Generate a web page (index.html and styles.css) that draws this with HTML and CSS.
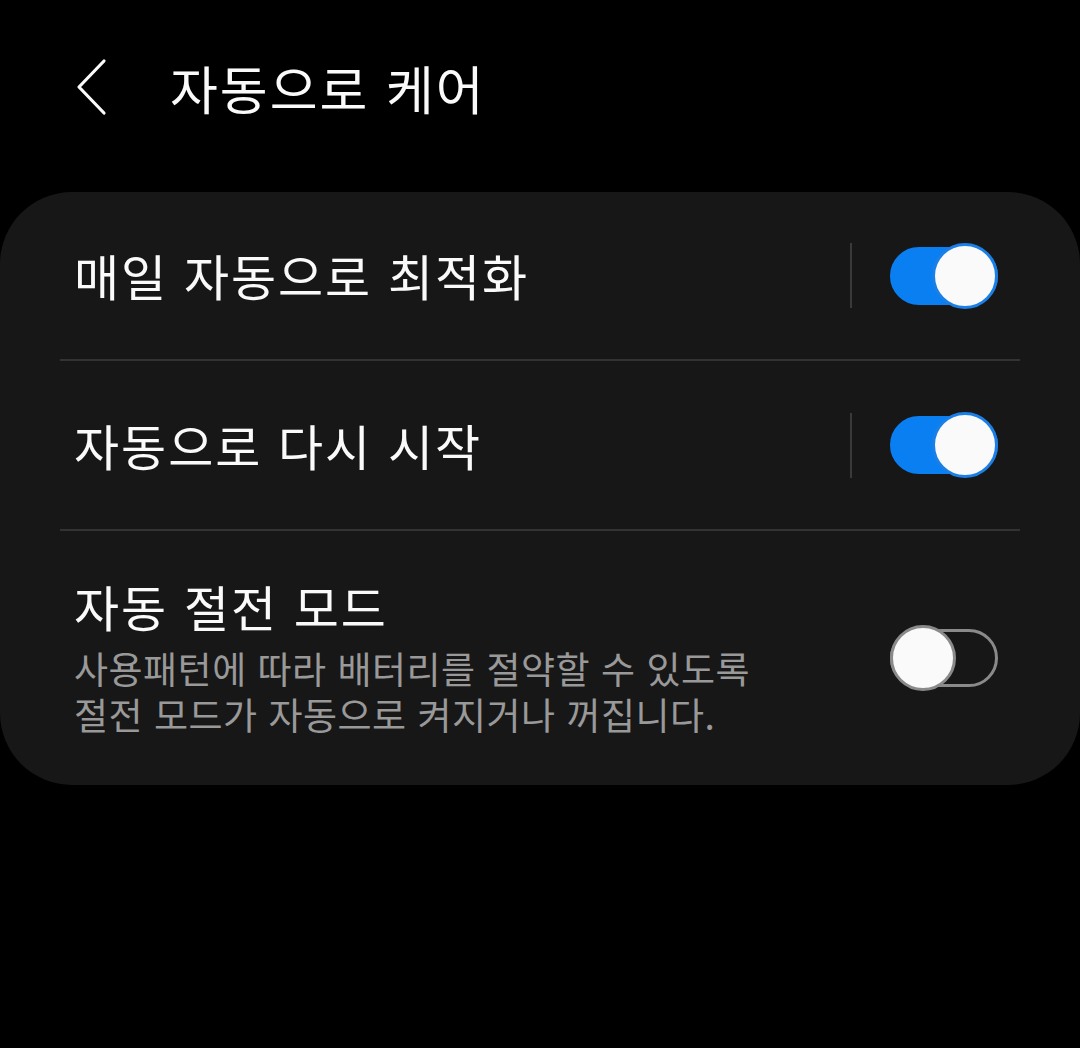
FILE: index.html
```html
<!DOCTYPE html>
<html lang="ko">
<head>
  <meta charset="UTF-8" />
  <meta name="viewport" content="width=device-width, initial-scale=1.0"/>
  <title>자동으로 케어</title>
  <link rel="stylesheet" href="styles.css">
</head>
<body>

  <header class="topbar">
    <button class="back" aria-label="뒤로">
      <svg width="34" height="58" viewBox="0 0 34 58">
        <path d="M30 3 L5 29 L30 55" fill="none" stroke="#fafafa" stroke-width="3.2" stroke-linecap="round" stroke-linejoin="round"/>
      </svg>
    </button>
    <h1>자동으로 케어</h1>
  </header>

  <div class="card">
    <div class="row">
      <div class="row-text">
        <div class="row-title">매일 자동으로 최적화</div>
      </div>
      <span class="sep"></span>
      <span class="switch on"><span class="thumb"></span></span>
    </div>

    <div class="row">
      <div class="row-text">
        <div class="row-title">자동으로 다시 시작</div>
      </div>
      <span class="sep"></span>
      <span class="switch on"><span class="thumb"></span></span>
    </div>

    <div class="row row-tall">
      <div class="row-text">
        <div class="row-title">자동 절전 모드</div>
        <div class="row-sub">사용패턴에 따라 배터리를 절약할 수 있도록<br>절전 모드가 자동으로 켜지거나 꺼집니다.</div>
      </div>
      <span class="switch"><span class="thumb"></span></span>
    </div>
  </div>

</body>
</html>
```

FILE: styles.css
```css
body {
  margin: 0;
  background: #000;
  color: #fafafa;
  font-family: "Noto Sans CJK KR", "Noto Sans", sans-serif;
}

.topbar {
  height: 174px;
  display: flex;
  align-items: center;
  padding-left: 74px;
}

.back {
  background: none;
  border: none;
  padding: 0;
  width: 96px;
  display: flex;
  align-items: center;
}

h1 {
  margin: 0;
  font-size: 52px;
  font-weight: 400;
  letter-spacing: 2px;
}

.card {
  margin-top: 18px;
  background: #171717;
  border-radius: 72px;
  padding: 0 60px;
}

.row {
  display: flex;
  align-items: center;
  height: 168px;
  border-bottom: 2px solid #333;
}

.row:first-child {
  height: 167px;
}

.row-tall {
  height: 254px;
  border-bottom: none;
}

.row-text {
  flex: 1;
  padding-left: 14px;
}

.row-title {
  font-size: 49px;
  letter-spacing: 2px;
  line-height: 1.2;
}

.row-tall .row-title {
  margin-top: -2px;
}

.row-sub {
  margin-top: 10px;
  font-size: 37px;
  letter-spacing: 0.5px;
  line-height: 46px;
  color: #999;
}

.sep {
  width: 2px;
  height: 65px;
  background: #3a3a3a;
  margin-right: 38px;
}

.switch {
  position: relative;
  width: 108px;
  height: 58px;
  margin-right: 22px;
  border-radius: 29px;
  box-sizing: border-box;
  border: 3px solid #8a8a8a;
}

.switch .thumb {
  position: absolute;
  top: -7px;
  left: -3px;
  width: 66px;
  height: 66px;
  box-sizing: border-box;
  border-radius: 50%;
  background: #fafafa;
  border: 3px solid #8a8a8a;
}

.switch.on {
  background: #0a7ff2;
  border-color: #0a7ff2;
}

.switch.on .thumb {
  left: auto;
  right: -3px;
  border-color: #1b7fe6;
}
```
